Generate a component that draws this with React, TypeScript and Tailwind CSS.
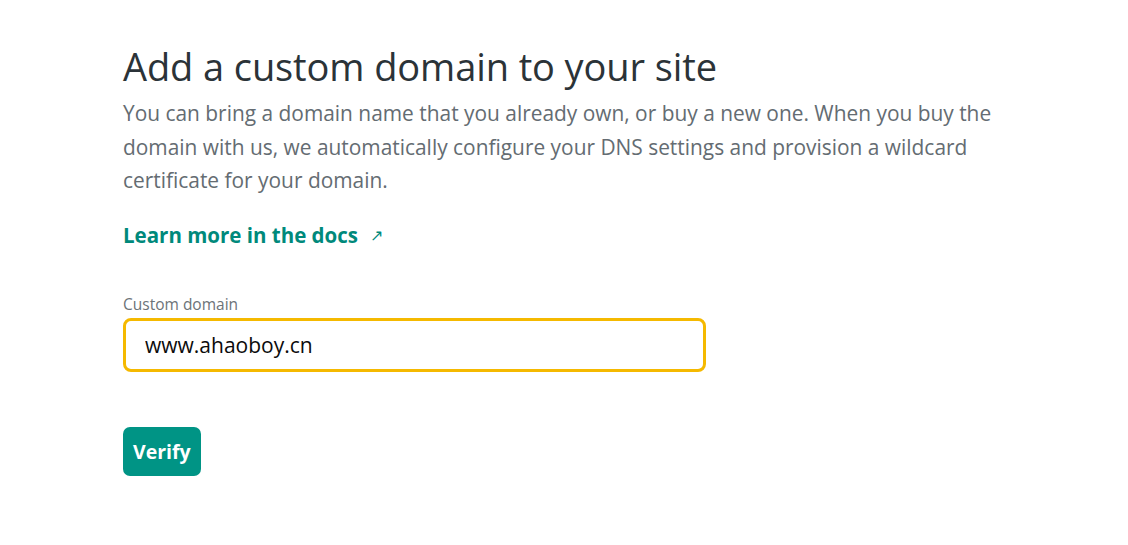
import { useState } from 'react';

const App = () => {
  const [domain, setDomain] = useState('www.ahaoboy.cn');

  return (
    <div className="min-h-screen w-full bg-white font-['Open_Sans',sans-serif]">
      <div className="pl-[123px] pt-[40px] w-[1100px]">
        <h1 className="text-[38px] leading-[52px] font-normal text-[#2b3338] tracking-[-0.1px]">
          Add a custom domain to your site
        </h1>
        <p className="mt-[5px] text-[20.9px] leading-[33.5px] text-[#646c72] w-[900px]">
          You can bring a domain name that you already own, or buy a new one. When you buy the domain
          with us, we automatically configure your DNS settings and provision a wildcard certificate
          for your domain.
        </p>

        <a
          href="#"
          className="mt-[22px] inline-flex items-center gap-[12px] text-[20.5px] font-bold text-[#00897b]"
        >
          Learn more in the docs
          <span className="text-[16px] font-normal">↗</span>
        </a>

        <div className="mt-[44px] flex flex-col">
          <label className="text-[15.5px] leading-[20px] text-[#6c7378]">Custom domain</label>
          <input
            autoFocus
            value={domain}
            onChange={(e) => setDomain(e.target.value)}
            className="mt-[4px] w-[583px] h-[54px] rounded-[8px] border-[3px] border-[#f5b900] px-[19px] text-[21px] text-[#0b0b0b] caret-black outline-none"
          />
        </div>

        <button className="mt-[55px] h-[49px] px-[10px] rounded-[7px] bg-[#009485] text-white text-[19.5px] font-bold">
          Verify
        </button>
      </div>
    </div>
  );
};

export default App;
